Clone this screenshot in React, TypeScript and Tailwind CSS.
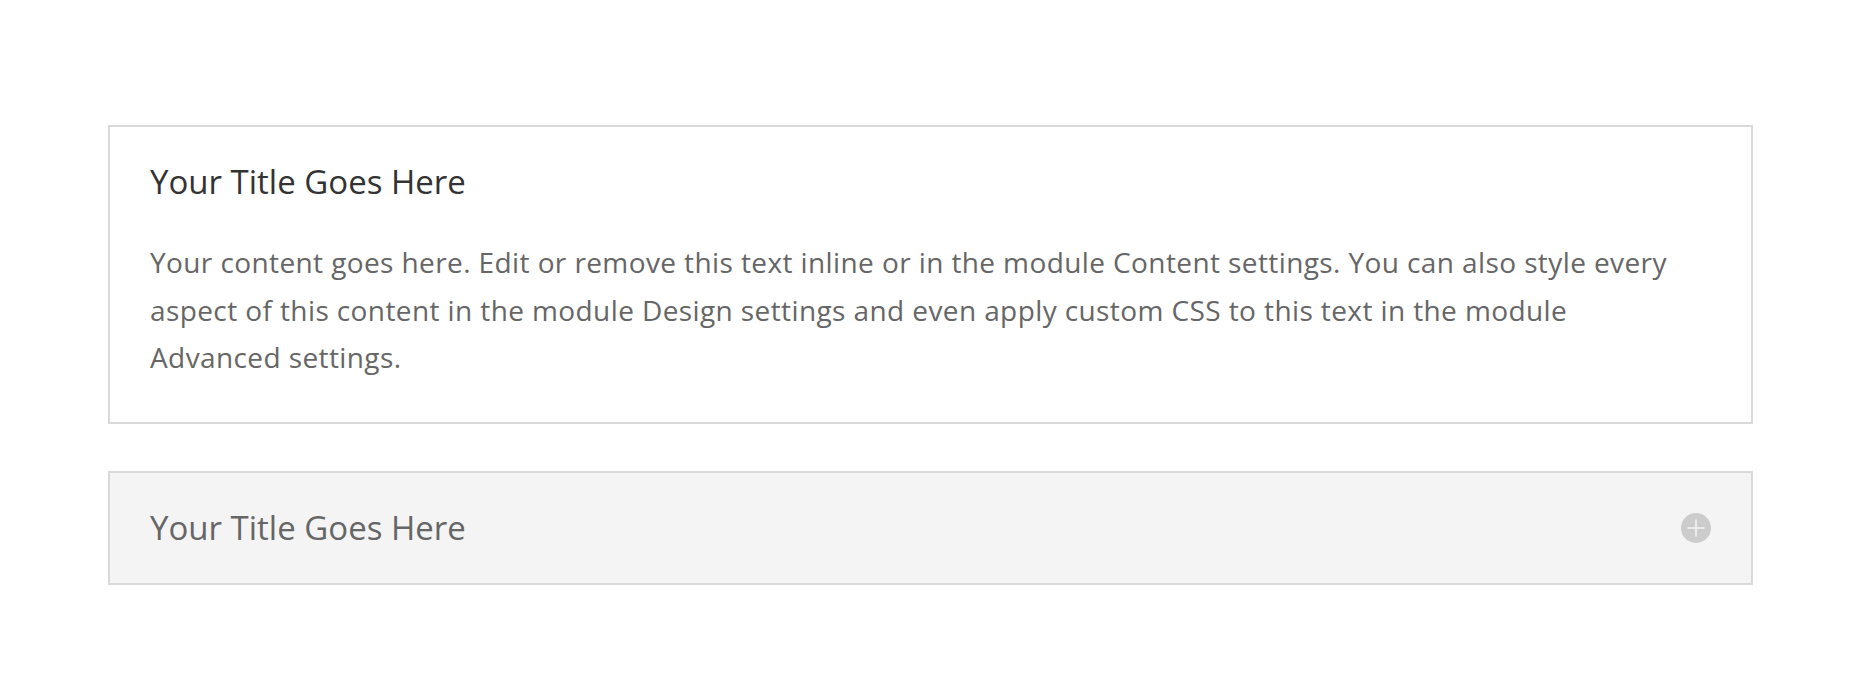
import React from 'react';

const font = { fontFamily: '"Open Sans", "Liberation Sans", sans-serif' };

const PlusIcon: React.FC = () => (
  <svg width="30" height="30" viewBox="0 0 30 30" className="shrink-0">
    <circle cx="15" cy="15" r="15" fill="#cccccc" />
    <path d="M15 6.5v17M6.5 15h17" stroke="#f4f4f4" strokeWidth="1.6" />
  </svg>
);

const App: React.FC = () => {
  return (
    <div className="min-h-[684px] w-full bg-white pt-[125px]" style={font}>
      <div className="ml-[108px] flex w-[1645px] flex-col gap-[47px]">
        {/* open toggle */}
        <div className="border-2 border-[#d9d9d9] bg-white p-[40px]">
          <h5 className="text-[33px] leading-[30px] text-[#333333]">Your Title Goes Here</h5>
          <p className="mt-[42px] max-w-[1535px] text-[28px] leading-[47.6px] tracking-[0.4px] text-[#666666]">
            Your content goes here. Edit or remove this text inline or in the module Content settings. You can also
            style every aspect of this content in the module Design settings and even apply custom CSS to this text in
            the module Advanced settings.
          </p>
        </div>

        {/* closed toggle */}
        <div className="flex items-center justify-between border-2 border-[#d9d9d9] bg-[#f4f4f4] p-[40px]">
          <h5 className="text-[33px] leading-[30px] text-[#666666]">Your Title Goes Here</h5>
          <PlusIcon />
        </div>
      </div>
    </div>
  );
};

export default App;
